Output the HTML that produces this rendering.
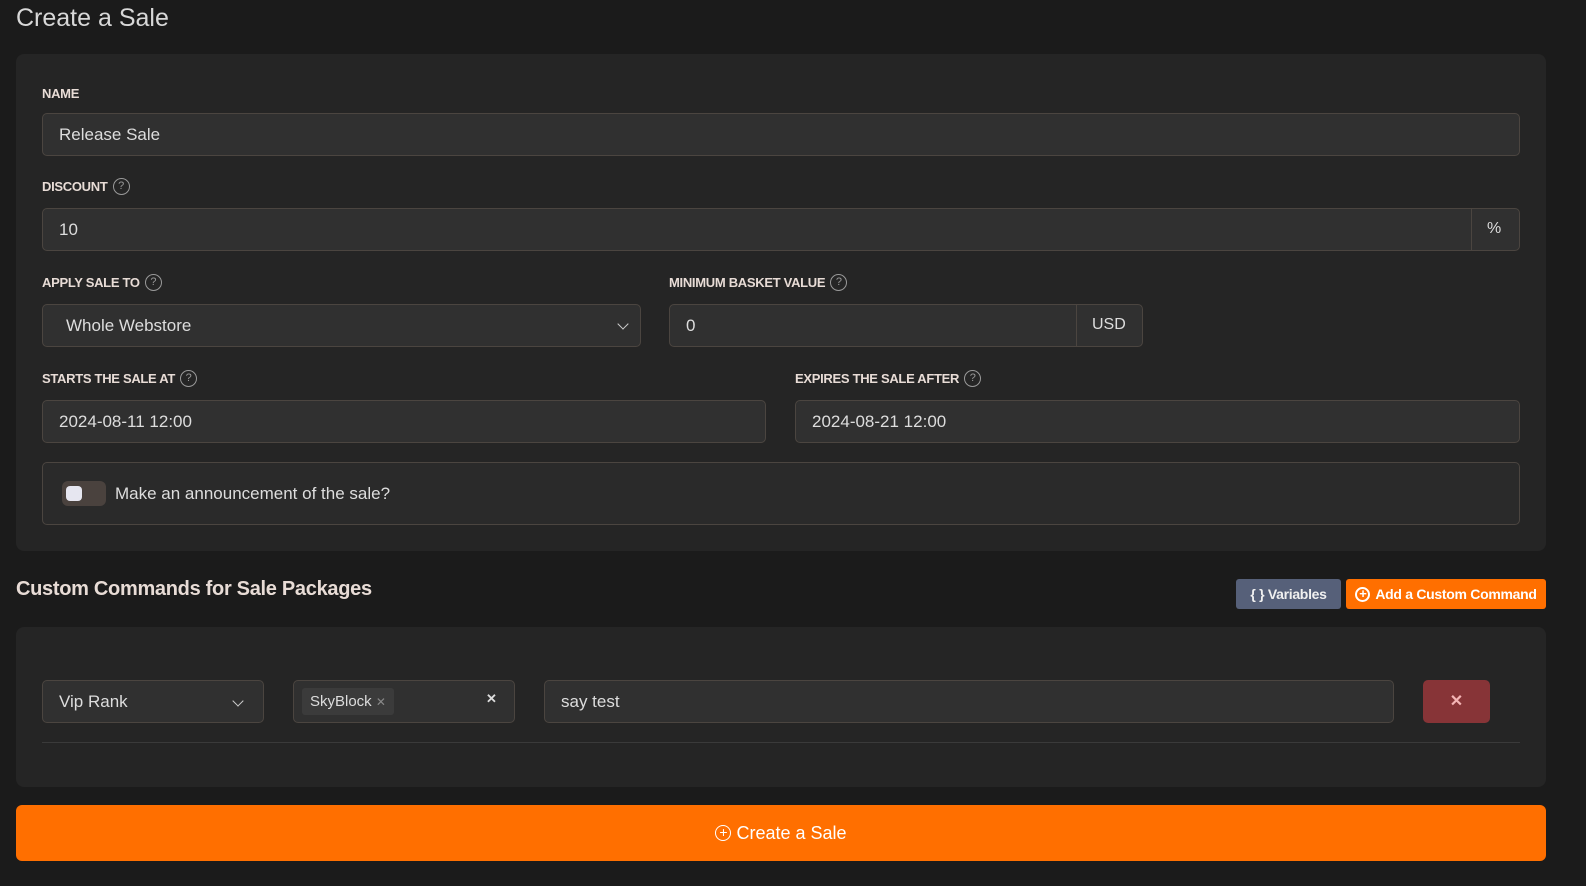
<!DOCTYPE html>
<html style="overflow:hidden;width:1586px;height:886px"><head><meta charset="utf-8"><style>
*{box-sizing:border-box;margin:0;padding:0}
body{width:1586px;height:886px;background:#1b1b1b;font-family:"Liberation Sans",sans-serif;color:#ddd;position:relative;overflow:hidden}
.a{position:absolute}
.card{background:#252525;border-radius:8px}
.inp{position:absolute;background:#303030;border:1px solid #4b4540;border-radius:5px;height:43px;font-size:17px;color:#ddd;padding-left:16px;line-height:41px}
.lbl{position:absolute;font-size:13px;font-weight:bold;color:#e8dcd6;letter-spacing:-0.3px;display:flex;align-items:center;height:18px}
.q{display:inline-block;width:17px;height:17px;border:1.5px solid #999;border-radius:50%;font-size:11px;color:#999;text-align:center;line-height:14px;font-weight:normal;margin-left:5px}
.chev{position:absolute;width:8px;height:8px;border-right:1.5px solid #ccc;border-bottom:1.5px solid #ccc;transform:rotate(45deg)}
</style></head><body>
<div class="a" style="left:16px;top:4px;font-size:25px;color:#d8d8d8">Create a Sale</div>
<div class="a card" style="left:16px;top:54px;width:1530px;height:497px"></div>
<div class="lbl" style="left:42px;top:84px">NAME</div>
<div class="inp" style="left:42px;top:113px;width:1478px">Release Sale</div>
<div class="lbl" style="left:42px;top:177px">DISCOUNT<span class="q">?</span></div>
<div class="inp" style="left:42px;top:208px;width:1478px">10</div>
<div class="a" style="left:1471px;top:209px;width:1px;height:41px;background:#4b4540"></div>
<div class="a" style="left:1487px;top:220px;font-size:16px">%</div>
<div class="lbl" style="left:42px;top:273px">APPLY SALE TO<span class="q">?</span></div>
<div class="inp" style="left:42px;top:304px;width:599px;padding-left:23px">Whole Webstore</div>
<div class="chev" style="left:619px;top:320px"></div>
<div class="lbl" style="left:669px;top:273px">MINIMUM BASKET VALUE<span class="q">?</span></div>
<div class="inp" style="left:669px;top:304px;width:474px">0</div>
<div class="a" style="left:1076px;top:305px;width:1px;height:41px;background:#4b4540"></div>
<div class="a" style="left:1092px;top:316px;font-size:16px">USD</div>
<div class="lbl" style="left:42px;top:369px">STARTS THE SALE AT<span class="q">?</span></div>
<div class="inp" style="left:42px;top:400px;width:724px">2024-08-11 12:00</div>
<div class="lbl" style="left:795px;top:369px">EXPIRES THE SALE AFTER<span class="q">?</span></div>
<div class="inp" style="left:795px;top:400px;width:725px">2024-08-21 12:00</div>
<div class="a" style="left:42px;top:462px;width:1478px;height:63px;border:1px solid #4b4540;border-radius:5px;background:#2a2a2a"></div>
<div class="a" style="left:62px;top:481px;width:44px;height:25px;border-radius:6px;background:#4a423e"></div>
<div class="a" style="left:66px;top:486px;width:16px;height:15px;border-radius:4px;background:#e6e6f0"></div>
<div class="a" style="left:115px;top:484px;font-size:17px;color:#ddd">Make an announcement of the sale?</div>
<div class="a" style="left:16px;top:578px;font-size:20px;font-weight:bold;color:#e8dcd6;letter-spacing:-0.3px">Custom Commands for Sale Packages</div>
<div class="a" style="left:1236px;top:579px;width:105px;height:30px;background:#566079;border-radius:3px;color:#f0f0f0;font-size:14px;font-weight:bold;line-height:30px;text-align:center;letter-spacing:-0.3px">{ } Variables</div>
<div class="a" style="left:1346px;top:579px;width:200px;height:30px;background:#ff6f00;border-radius:3px;color:#fff;font-size:14px;font-weight:bold;line-height:30px;text-align:center;letter-spacing:-0.3px;display:flex;align-items:center;justify-content:center"><span style="display:inline-block;width:15px;height:15px;border:2px solid #fff;border-radius:50%;font-size:13px;line-height:10px;margin-right:5px">+</span>Add a Custom Command</div>
<div class="a card" style="left:16px;top:627px;width:1530px;height:160px"></div>
<div class="inp" style="left:42px;top:680px;width:222px">Vip Rank</div>
<div class="chev" style="left:234px;top:697px"></div>
<div class="inp" style="left:293px;top:680px;width:222px;padding-left:8px"><span style="display:inline-block;background:#3b3b3b;border-radius:3px;height:27px;line-height:27px;padding:0 8px;font-size:15px;vertical-align:1px">SkyBlock <span style="color:#888;font-size:12px">✕</span></span></div>
<div class="a" style="left:486px;top:691px;font-size:13px;font-weight:bold;color:#ddd">✕</div>
<div class="inp" style="left:544px;top:680px;width:850px">say test</div>
<div class="a" style="left:1423px;top:680px;width:67px;height:43px;background:#873437;border-radius:5px;color:#f4b5b5;text-align:center;line-height:43px;font-size:16px;font-weight:bold">✕</div>
<div class="a" style="left:42px;top:742px;width:1478px;height:1px;background:#3a3a3a"></div>
<div class="a" style="left:16px;top:805px;width:1530px;height:56px;background:#ff6f00;border-radius:6px;color:#fff;font-size:18px;display:flex;align-items:center;justify-content:center"><span style="display:inline-block;width:16px;height:16px;border:1.5px solid #fff;border-radius:50%;font-size:14px;line-height:12px;text-align:center;margin-right:5px">+</span>Create a Sale</div>
</body></html>
